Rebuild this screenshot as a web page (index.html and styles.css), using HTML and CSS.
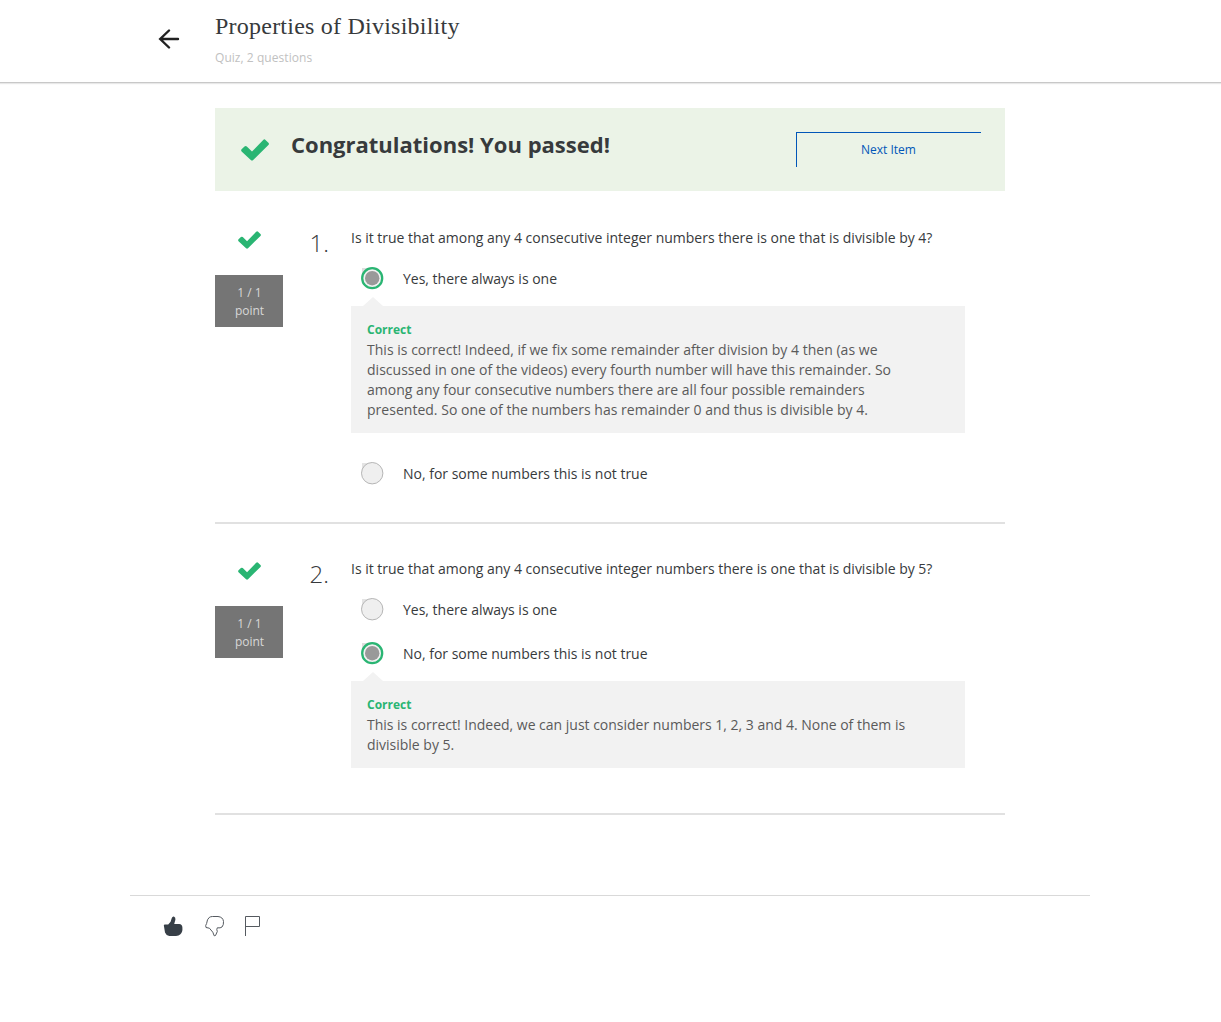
FILE: index.html
```html
<!DOCTYPE html>
<html lang="en">
<head>
<meta charset="utf-8">
<title>Properties of Divisibility</title>
<link rel="stylesheet" href="styles.css">
</head>
<body>
<svg class="symbols" aria-hidden="true">
  <symbol id="check" viewBox="0 0 28 22"><path d="M.6 12.4 Q-.4 11.3.6 10.2L3.5 7.4Q4.7 6.4 5.8 7.4L11 12.5 22.2 1Q23.4-.2 24.5.9L27.4 3.7Q28.5 4.9 27.4 6L12.2 21Q11 22.1 9.8 21Z"/></symbol>
  <symbol id="radio-off" viewBox="0 0 24 24"><path fill="#e4e4e4" d="M1 1H9V9H1Z"/><circle cx="11.2" cy="11.2" r="10.7" fill="#efefef" stroke="#b5b5b5"/></symbol>
  <symbol id="radio-on" viewBox="0 0 24 24"><path fill="#dedede" d="M1 1H9V9H1Z"/><circle cx="11.2" cy="11.2" r="10" fill="#f1f1f1" stroke="#2ab573" stroke-width="2.3"/><circle cx="11.2" cy="11.2" r="7.2" fill="#999"/></symbol>
</svg>
<header class="header">
  <svg class="back" viewBox="0 0 22 20"><path d="M11 1.5 2.2 10 11 18.5M2.5 10H20"/></svg>
  <div>
    <h1 class="title">Properties of Divisibility</h1>
    <p class="subtitle">Quiz, 2 questions</p>
  </div>
</header>
<main class="quiz">
  <section class="banner">
    <svg class="banner-check"><use href="#check"/></svg>
    <h2 class="banner-title">Congratulations! You passed!</h2>
    <a class="next">Next Item</a>
  </section>

  <section class="question">
    <div class="score">
      <svg class="score-check"><use href="#check"/></svg>
      <div class="points">1 / 1<br>point</div>
    </div>
    <div class="number">1.</div>
    <div class="body">
      <p class="prompt">Is it true that among any 4 consecutive integer numbers there is one that is divisible by 4?</p>
      <div class="option"><svg class="radio"><use href="#radio-on"/></svg><span>Yes, there always is one</span></div>
      <div class="feedback">
        <strong class="verdict">Correct</strong>
        <p class="long">This is correct! Indeed, if we fix some remainder after division by 4 then (as we<br>discussed in one of the videos) every fourth number will have this remainder. So<br>among any four consecutive numbers there are all four possible remainders<br>presented. So one of the numbers has remainder 0 and thus is divisible by 4.</p>
      </div>
      <div class="option last"><svg class="radio"><use href="#radio-off"/></svg><span>No, for some numbers this is not true</span></div>
    </div>
  </section>

  <section class="question">
    <div class="score">
      <svg class="score-check"><use href="#check"/></svg>
      <div class="points">1 / 1<br>point</div>
    </div>
    <div class="number">2.</div>
    <div class="body">
      <p class="prompt">Is it true that among any 4 consecutive integer numbers there is one that is divisible by 5?</p>
      <div class="option"><svg class="radio"><use href="#radio-off"/></svg><span>Yes, there always is one</span></div>
      <div class="option"><svg class="radio"><use href="#radio-on"/></svg><span>No, for some numbers this is not true</span></div>
      <div class="feedback">
        <strong class="verdict">Correct</strong>
        <p>This is correct! Indeed, we can just consider numbers 1, 2, 3 and 4. None of them is<br>divisible by 5.</p>
      </div>
    </div>
  </section>
</main>
<footer class="footer">
  <svg class="icon" width="20" height="21" viewBox="0 0 20 21"><path class="solid" d="M.8 9.2 1.5 8.6H5.2L7.6 5.8 8.7 2.2Q9.3.2 10.9.4 12.8 1 12.4 3.8L11.2 8H16.2Q19.2 8.4 19.4 11.5 19.8 16 17.4 18.3 15.8 20 13 20H6.3Q3 19.4 2 16.5Z"/></svg>
  <svg class="icon" width="20" height="21" viewBox="0 0 20 21"><path class="line" d="M4.2 1.5Q5.5.5 7.5.5H13Q18 1 18.5 5.5 18.8 9 17 11 15.5 12.3 12.3 11.8L11.8 13.5 12.3 15.5 10.5 19.5 9.2 19.8 7.8 16.2 4.4 12.2 1 11.5.7 9.5 1.6 7.5 2.5 3.8Z"/></svg>
  <svg class="icon" width="16" height="21" viewBox="0 0 16 21"><path class="line" d="M.5 20V.5H14.5V10.5H.5"/></svg>
</footer>
</body>
</html>
```
FILE: styles.css
```css
* { box-sizing: border-box; }
body {
  margin: 0;
  background: #fff;
  color: #373a3c;
  font: 14px/20px "Open Sans", "Noto Sans", sans-serif;
}
h1, h2, p { margin: 0; }
.symbols { position: absolute; width: 0; height: 0; }

.header {
  display: flex;
  height: 83px;
  padding-left: 158px;
  border-bottom: 1px solid #c8c8c8;
  box-shadow: 0 1px 1px #e8e8e8;
}
.back {
  width: 22px;
  height: 20px;
  margin: 29px 35px 0 0;
  fill: none;
  stroke: #222;
  stroke-width: 2.4;
  stroke-linecap: round;
}
.title {
  margin-top: 10px;
  font: 400 24px/32px "Liberation Serif", serif;
  letter-spacing: 0.23px;
  white-space: nowrap;
}
.subtitle {
  margin-top: 7px;
  font-size: 12px;
  line-height: 18px;
  letter-spacing: 0.05px;
  color: #c1c1c1;
}

.quiz { width: 790px; margin: 25px 0 0 215px; }
.banner {
  display: flex;
  height: 83px;
  padding: 24px 24px 0 26px;
  background: #ebf3e7;
}
.banner-check { width: 28px; height: 22px; margin: 7px 22px 0 0; fill: #2ab573; }
.banner-title { font-size: 22px; line-height: 24px; font-weight: 700; }
.next {
  width: 185px;
  height: 35px;
  margin-left: auto;
  padding-right: 1px;
  border-top: 1px solid #0156b8;
  border-left: 1px solid #0156b8;
  color: #0156b8;
  font-size: 12px;
  line-height: 34px;
  text-align: center;
}

.question {
  display: flex;
  padding-top: 37px;
  border-bottom: 2px solid #e1e1e1;
}
.question:nth-of-type(2) { height: 333px; }
.question:nth-of-type(3) { height: 291px; padding-top: 35px; }
.question:nth-of-type(2), .question:nth-of-type(3) { letter-spacing: -0.01px; }
.score { width: 68px; }
.score-check { display: block; width: 23px; height: 18px; margin: 3px 0 26px 23px; fill: #2ab573; }
.points {
  height: 52px;
  padding: 9px 0 0 1px;
  background: #757575;
  color: #d8d8d8;
  font-size: 12px;
  line-height: 18px;
  text-align: center;
}
.number {
  width: 68px;
  padding-right: 22px;
  font-size: 24px;
  line-height: 30px;
  font-weight: 300;
  text-align: right;
}
.body { width: 614px; }
.prompt { white-space: nowrap; }
.option {
  display: flex;
  align-items: center;
  height: 24px;
  margin: 18px 0 0 10px;
}
.option + .option { margin-top: 20px; }
.option > span { padding-top: 1px; }
.radio { width: 24px; height: 24px; margin: 1px 18px 0 0; flex: none; }
.feedback {
  position: relative;
  margin-top: 16px;
  padding: 14px 16px 13px;
  background: #f2f2f2;
  color: #5a5a5a;
  white-space: nowrap;
}
.feedback::before {
  content: "";
  position: absolute;
  top: -9px;
  left: 12px;
  border: 10px solid transparent;
  border-top: 0;
  border-bottom: 9px solid #f2f2f2;
}
.verdict { display: block; font-size: 12px; color: #2ab573; }
.long { letter-spacing: 0.02px; }
.last { margin-top: 28px; }

.footer {
  display: flex;
  width: 960px;
  margin: 80px 0 0 130px;
  padding: 20px 0 0 33px;
  border-top: 1px solid #d9d9d9;
}
.icon { margin-right: 22px; }
.icon + .icon { margin-right: 20px; }
.solid { fill: #373f47; }
.line { fill: none; stroke: #555a60; stroke-width: 1; }
```
